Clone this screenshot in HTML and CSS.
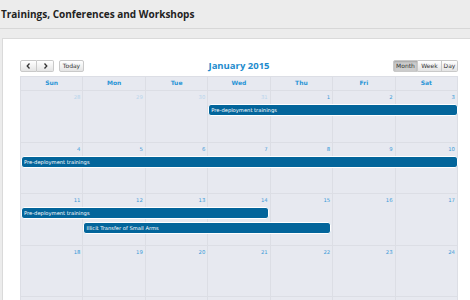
FILE: index.html
```html
<!DOCTYPE html>
<html lang="en">
<head>
    <meta charset="UTF-8">
    <title>Trainings, Conferences and Workshops</title>
    <link rel="stylesheet" href="styles.css">
</head>
<body>

<header class="page-header">
    <h1>Trainings, Conferences and Workshops</h1>
</header>

<section class="panel">
    <div class="toolbar">
        <div class="tb-left">
            <div class="btn-group">
                <button class="btn btn-icon"><svg width="5" height="6" viewBox="0 0 5 6"><polyline points="3.5,0.5 1.2,3 3.5,5.5" fill="none" stroke="#333" stroke-width="1.3"/></svg></button>
                <button class="btn btn-icon"><svg width="5" height="6" viewBox="0 0 5 6"><polyline points="1.5,0.5 3.8,3 1.5,5.5" fill="none" stroke="#333" stroke-width="1.3"/></svg></button>
            </div>
            <button class="btn btn-today">Today</button>
        </div>
        <h2 class="cal-title">January 2015</h2>
        <div class="tb-right">
            <div class="btn-group">
                <button class="btn btn-month active">Month</button>
                <button class="btn btn-week">Week</button>
                <button class="btn btn-day">Day</button>
            </div>
        </div>
    </div>

    <div class="calendar">
        <div class="cal-head">
            <div>Sun</div><div>Mon</div><div>Tue</div><div>Wed</div><div>Thu</div><div>Fri</div><div>Sat</div>
        </div>

        <div class="week">
            <div class="day other">28</div>
            <div class="day other">29</div>
            <div class="day other">30</div>
            <div class="day other">31</div>
            <div class="day">1</div>
            <div class="day">2</div>
            <div class="day">3</div>
            <div class="event r2 c4 s4 cont">Pre-deployment trainings</div>
        </div>

        <div class="week">
            <div class="day">4</div>
            <div class="day">5</div>
            <div class="day">6</div>
            <div class="day">7</div>
            <div class="day">8</div>
            <div class="day">9</div>
            <div class="day">10</div>
            <div class="event r2 c1 s7 cont">Pre-deployment trainings</div>
        </div>

        <div class="week">
            <div class="day">11</div>
            <div class="day">12</div>
            <div class="day">13</div>
            <div class="day">14</div>
            <div class="day">15</div>
            <div class="day">16</div>
            <div class="day">17</div>
            <div class="event r2 c1 s4">Pre-deployment trainings</div>
            <div class="event r3 c2 s4">Illicit Transfer of Small Arms</div>
        </div>

        <div class="week">
            <div class="day">18</div>
            <div class="day">19</div>
            <div class="day">20</div>
            <div class="day">21</div>
            <div class="day">22</div>
            <div class="day">23</div>
            <div class="day">24</div>
        </div>

        <div class="week">
            <div class="day">25</div>
            <div class="day">26</div>
            <div class="day">27</div>
            <div class="day">28</div>
            <div class="day">29</div>
            <div class="day">30</div>
            <div class="day">31</div>
        </div>
    </div>
</section>

</body>
</html>
```

FILE: styles.css
```css
body {
    margin: 0;
    background-color: #ececec;
    font-family: "DejaVu Sans", Verdana, sans-serif;
    overflow: hidden;
}

.page-header {
    height: 28px;
    border-bottom: 1px solid #d7d7d7;
    display: flex;
    align-items: center;
    padding-left: 1px;
}

.page-header h1 {
    margin: 0;
    font-family: "Open Sans", sans-serif;
    font-size: 10px;
    font-weight: 700;
    color: #222;
}

.panel {
    margin: 9px 0 0 2px;
    border-top: 1px solid #dadada;
    border-left: 1px solid #dadada;
    background-color: #fff;
    padding: 20px 12px 0 17px;
    height: 400px;
}

.toolbar {
    display: grid;
    grid-template-columns: 1fr auto 1fr;
    align-items: center;
    height: 12px;
    margin-bottom: 5px;
}

.tb-left {
    display: flex;
    gap: 5px;
}

.tb-right {
    display: flex;
    justify-content: flex-end;
}

.btn-group {
    display: flex;
}

.btn {
    height: 12px;
    padding: 0;
    font-family: "DejaVu Sans", sans-serif;
    font-size: 6px;
    color: #333;
    background: linear-gradient(#ffffff, #e4e4e4);
    border: 1px solid #c9c9c9;
    border-radius: 2px;
    display: flex;
    align-items: center;
    justify-content: center;
    cursor: pointer;
}

.btn-group .btn {
    border-radius: 0;
}

.btn-group .btn + .btn {
    border-left: none;
}

.btn-group .btn:first-child {
    border-radius: 2px 0 0 2px;
}

.btn-group .btn:last-child {
    border-radius: 0 2px 2px 0;
}

.btn-icon {
    width: 17px;
}

.btn-today {
    width: 25px;
}

.btn-month {
    width: 25px;
}

.btn-week {
    width: 24px;
}

.btn-day {
    width: 16px;
}

.btn.active {
    background: #cdcdcd;
    box-shadow: inset 0 1px 2px rgba(0, 0, 0, 0.2);
}

.cal-title {
    margin: 0;
    font-family: "Open Sans", sans-serif;
    font-size: 9.5px;
    font-weight: 700;
    color: #1d8bcd;
}

.calendar {
    width: 438px;
    background-color: #e7e9f0;
    border-left: 1px solid #dcdee5;
    box-sizing: border-box;
}

.cal-head {
    display: grid;
    grid-template-columns: repeat(7, 1fr);
    height: 15px;
    border-top: 1px solid #dcdee5;
    border-bottom: 1px solid #dcdee5;
    box-sizing: border-box;
}

.cal-head div {
    border-right: 1px solid #dcdee5;
    text-align: center;
    font-size: 6px;
    font-weight: 700;
    color: #2a95d6;
    line-height: 11px;
}

.week {
    display: grid;
    grid-template-columns: repeat(7, 1fr);
    grid-template-rows: 12px 15px 15px 1fr;
    height: 51.6px;
}

.day {
    grid-row: 1 / -1;
    border-right: 1px solid #dcdee5;
    border-bottom: 1px solid #dcdee5;
    text-align: right;
    padding-right: 2px;
    font-size: 5.3px;
    line-height: 12px;
    color: #3a9ad8;
}

.day:nth-child(1) { grid-column: 1; }
.day:nth-child(2) { grid-column: 2; }
.day:nth-child(3) { grid-column: 3; }
.day:nth-child(4) { grid-column: 4; }
.day:nth-child(5) { grid-column: 5; }
.day:nth-child(6) { grid-column: 6; }
.day:nth-child(7) { grid-column: 7; }

.day.other {
    color: #b9d5ec;
}

.event {
    height: 12px;
    box-sizing: border-box;
    margin: 1px 2px 0 0;
    background-color: #03659b;
    border: 1px solid #fff;
    border-radius: 3px;
    color: #fff;
    font-size: 5.2px;
    line-height: 10px;
    padding-left: 2px;
    white-space: nowrap;
    overflow: hidden;
}

.event.cont {
    margin-right: 0;
}

.r2 { grid-row: 2; }
.r3 { grid-row: 3; }

.c1 { grid-column-start: 1; }
.c2 { grid-column-start: 2; }
.c4 { grid-column-start: 4; }

.s4 { grid-column-end: span 4; }
.s7 { grid-column-end: span 7; }
```
